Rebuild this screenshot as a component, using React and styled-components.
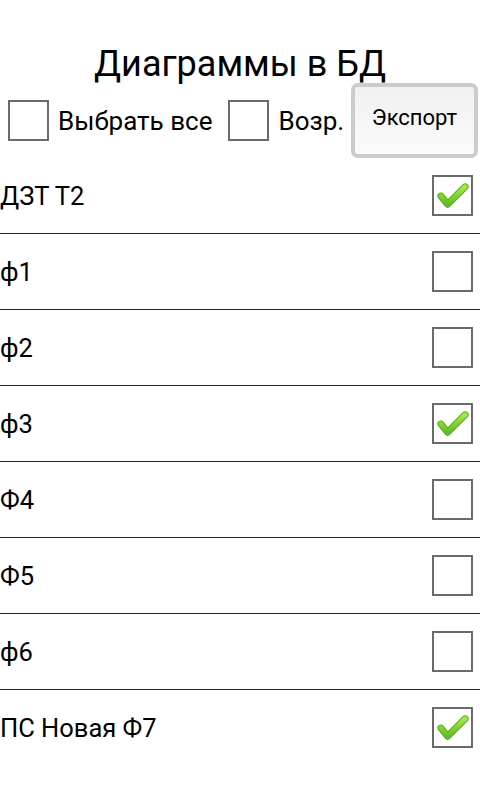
import React from 'react';
import styled, { createGlobalStyle } from 'styled-components';

const GlobalStyle = createGlobalStyle`
  html, body {
    margin: 0;
    padding: 0;
    background: #ffffff;
  }
  body {
    font-family: Roboto, "Noto Sans", "Liberation Sans", sans-serif;
    color: #000;
  }
`;

const Screen = styled.div`
  width: 480px;
  height: 800px;
  background: #fff;
  overflow: hidden;
`;

const Title = styled.h1`
  margin: 0;
  height: 83px;
  display: flex;
  align-items: flex-end;
  justify-content: center;
  font-size: 36px;
  font-weight: 400;
  line-height: 1;
  span {
    display: block;
    transform: translateY(-1px);
  }
`;

const Toolbar = styled.div`
  height: 75px;
  display: flex;
  align-items: center;
  padding-left: 8px;
`;

const Label = styled.span`
  font-size: 26px;
  margin-left: 9px;
  margin-right: ${(p) => p.$after || 0}px;
  white-space: nowrap;
`;

const Box = styled.div`
  width: 41px;
  height: 41px;
  box-sizing: border-box;
  border: 2px solid #6a6a6a;
  flex: 0 0 auto;
  display: flex;
  align-items: center;
  justify-content: center;
  background: #fff;
`;

const ExportButton = styled.button`
  flex: 0 0 auto;
  width: 127px;
  height: 75px;
  margin-left: auto;
  margin-right: 2px;
  box-sizing: border-box;
  border: 4px solid #cccccc;
  border-radius: 7px;
  background: linear-gradient(#f1f1f1, #fbfbfb);
  font-family: inherit;
  font-size: 22px;
  color: #000;
  padding: 0 0 6px;
  cursor: pointer;
`;

const List = styled.div`
  display: flex;
  flex-direction: column;
`;

const Row = styled.div`
  height: 75px;
  display: flex;
  align-items: center;
  justify-content: space-between;
  padding-right: 7px;
  border-bottom: ${(p) => (p.$last ? 'none' : '1px solid #222')};
`;

const RowText = styled.span`
  font-size: 25.5px;
`;

function Check() {
  return (
    <svg width="38" height="38" viewBox="0 0 38 38" aria-hidden="true">
      <defs>
        <linearGradient id="chk" x1="0" y1="0" x2="0" y2="1">
          <stop offset="0" stopColor="#a8e84a" />
          <stop offset="1" stopColor="#5fbf1c" />
        </linearGradient>
      </defs>
      <path
        d="M7 19 L14 27.5 L32 9.5"
        fill="none"
        stroke="#58ad1c"
        strokeWidth="7"
        strokeLinecap="round"
        strokeLinejoin="round"
      />
      <path
        d="M7 19 L14 27.5 L32 9.5"
        fill="none"
        stroke="url(#chk)"
        strokeWidth="5"
        strokeLinecap="round"
        strokeLinejoin="round"
      />
    </svg>
  );
}

function CheckBox({ checked }) {
  return <Box>{checked && <Check />}</Box>;
}

const items = [
  { name: 'ДЗТ Т2', checked: true },
  { name: 'ф1', checked: false },
  { name: 'ф2', checked: false },
  { name: 'ф3', checked: true },
  { name: 'Ф4', checked: false },
  { name: 'Ф5', checked: false },
  { name: 'ф6', checked: false },
  { name: 'ПС Новая Ф7', checked: true },
];

export default function App() {
  return (
    <Screen>
      <GlobalStyle />
      <Title>
        <span>Диаграммы в БД</span>
      </Title>
      <Toolbar>
        <CheckBox />
        <Label $after={16}>Выбрать все</Label>
        <CheckBox />
        <Label>Возр.</Label>
        <ExportButton type="button">Экспорт</ExportButton>
      </Toolbar>
      <List>
        {items.map((it, i) => (
          <Row key={it.name} $last={i === items.length - 1}>
            <RowText>{it.name}</RowText>
            <CheckBox checked={it.checked} />
          </Row>
        ))}
      </List>
    </Screen>
  );
}
